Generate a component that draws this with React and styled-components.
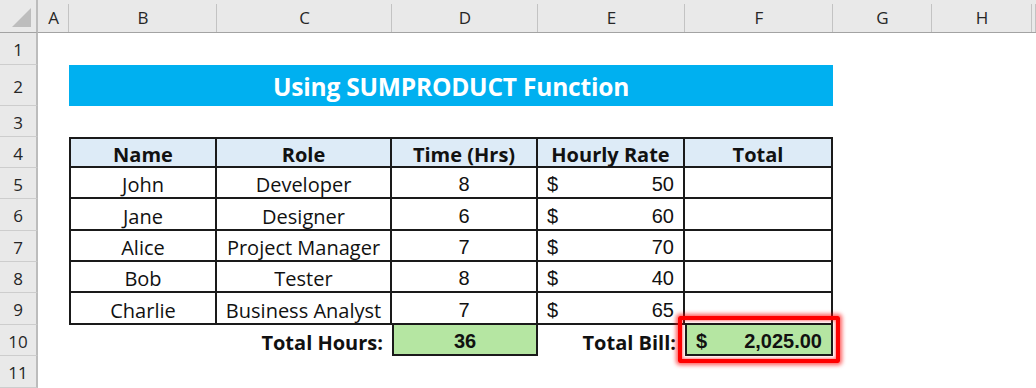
import React from 'react';
import styled, { createGlobalStyle, css } from 'styled-components';

const GlobalStyle = createGlobalStyle`
    html, body {
        margin: 0;
        padding: 0;
        background: #ffffff;
    }
    * {
        box-sizing: border-box;
    }
`;

// column widths (row-header, A..H, rest) and row heights (col-header, 1..11)
const COLS = [38, 31, 148, 175, 146, 147, 148, 99, 100];
const ROWS = [33, 32, 41, 31, 31, 31, 32, 31, 31, 32, 31, 32];
const LETTERS = ['A', 'B', 'C', 'D', 'E', 'F', 'G', 'H', ''];

const TEXT_FONT = `"Open Sans", "Noto Sans", sans-serif`;
const NUM_FONT = `"Liberation Sans", Arial, sans-serif`;
const LINE = '#1a1a1a';

const Sheet = styled.div`
    display: grid;
    grid-template-columns: ${COLS.map((c) => `${c}px`).join(' ')} 1fr;
    grid-template-rows: ${ROWS.map((r) => `${r}px`).join(' ')};
    width: 1036px;
    height: 388px;
    overflow: hidden;
    background: #ffffff;
    color: #111;
`;

const headerBase = css`
    background: #e9e9e9;
    color: #262626;
    font-family: ${TEXT_FONT};
    font-size: 17px;
    display: flex;
    align-items: center;
    justify-content: center;
`;

const Corner = styled.div`
    ${headerBase};
    grid-column: 1;
    grid-row: 1;
    border-bottom: 1px solid #a3a3a3;
    border-right: 2px solid #bcbcbc;
    align-items: flex-end;
    justify-content: flex-end;
    padding: 0 5px 5px 0;
`;

const ColHead = styled.div`
    ${headerBase};
    grid-column: ${(p) => p.$col};
    grid-row: 1;
    padding-top: 3px;
    border-bottom: 1px solid #a3a3a3;
    background:
        linear-gradient(#c3c3c3, #c3c3c3) right 4px / 1px calc(100% - 4px) no-repeat,
        #e9e9e9;
`;

const RowHead = styled.div`
    ${headerBase};
    grid-column: 1;
    grid-row: ${(p) => p.$row};
    border-bottom: 1px solid #cdcdcd;
    border-right: 2px solid #bcbcbc;
    padding-top: 2px;
`;

const Title = styled.div`
    grid-column: 3 / 8;
    grid-row: 3;
    background: #00b0f0;
    color: #ffffff;
    font-family: ${TEXT_FONT};
    font-weight: 700;
    font-size: 24.5px;
    letter-spacing: -0.2px;
    display: flex;
    align-items: center;
    justify-content: center;
    padding-top: 1px;
`;

const Cell = styled.div`
    grid-column: ${(p) => p.$col};
    grid-row: ${(p) => p.$row};
    display: flex;
    align-items: center;
    justify-content: ${(p) => p.$align || 'center'};
    padding: 4px 9px 0;
    font-family: ${(p) => (p.$num ? NUM_FONT : TEXT_FONT)};
    font-size: 20px;
    font-weight: ${(p) => (p.$bold ? 700 : 400)};
    white-space: nowrap;
    background: ${(p) => p.$fill || 'transparent'};
    border-right: ${(p) => (p.$boxed ? `2px solid ${LINE}` : 'none')};
    border-bottom: ${(p) => (p.$boxed ? `2px solid ${LINE}` : 'none')};
    border-left: ${(p) => (p.$left ? `2px solid ${LINE}` : 'none')};
    border-top: ${(p) => (p.$top ? `2px solid ${LINE}` : 'none')};
    position: ${(p) => (p.$highlight ? 'relative' : 'static')};

    ${(p) =>
        p.$highlight &&
        css`
            &::after {
                content: '';
                position: absolute;
                top: -9px;
                left: -9px;
                right: -9px;
                bottom: -9px;
                border: 4px solid #ff0000;
                border-radius: 2px;
                box-shadow: 0 0 4px 2px rgba(255, 0, 0, 0.65),
                    inset 0 0 3px 1px rgba(255, 0, 0, 0.5);
                pointer-events: none;
            }
        `}
`;

const HeaderCell = styled(Cell)`
    background: #ddebf7;
    font-weight: 700;
`;

const Money = styled(Cell)`
    justify-content: space-between;
`;

const TriangleIcon = () => (
    <svg width="19" height="19" viewBox="0 0 19 19">
        <polygon points="19,0 19,19 0,19" fill="#bdbdbd" />
    </svg>
);

const HEADERS = ['Name', 'Role', 'Time (Hrs)', 'Hourly Rate', 'Total'];

const DATA = [
    { name: 'John', role: 'Developer', hours: 8, rate: 50 },
    { name: 'Jane', role: 'Designer', hours: 6, rate: 60 },
    { name: 'Alice', role: 'Project Manager', hours: 7, rate: 70 },
    { name: 'Bob', role: 'Tester', hours: 8, rate: 40 },
    { name: 'Charlie', role: 'Business Analyst', hours: 7, rate: 65 },
];

const App = () => {
    const totalHours = DATA.reduce((s, d) => s + d.hours, 0);
    const totalBill = DATA.reduce((s, d) => s + d.hours * d.rate, 0);
    const billText = totalBill.toLocaleString('en-US', {
        minimumFractionDigits: 2,
        maximumFractionDigits: 2,
    });

    return (
        <>
            <GlobalStyle />
            <Sheet>
                <Corner>
                    <TriangleIcon />
                </Corner>
                {LETTERS.map((l, i) => (
                    <ColHead key={i} $col={i + 2}>
                        {l}
                    </ColHead>
                ))}
                {ROWS.slice(1).map((_, i) => (
                    <RowHead key={i} $row={i + 2}>
                        {i + 1}
                    </RowHead>
                ))}

                <Title>Using SUMPRODUCT Function</Title>

                {HEADERS.map((h, i) => (
                    <HeaderCell key={h} $col={i + 3} $row={5} $boxed $top $left={i === 0}>
                        {h}
                    </HeaderCell>
                ))}

                {DATA.map((d, i) => {
                    const row = i + 6;
                    return (
                        <React.Fragment key={d.name}>
                            <Cell $col={3} $row={row} $boxed $left>
                                {d.name}
                            </Cell>
                            <Cell $col={4} $row={row} $boxed>
                                {d.role}
                            </Cell>
                            <Cell $col={5} $row={row} $boxed $num>
                                {d.hours}
                            </Cell>
                            <Money $col={6} $row={row} $boxed $num>
                                <span>$</span>
                                <span>{d.rate}</span>
                            </Money>
                            <Cell $col={7} $row={row} $boxed />
                        </React.Fragment>
                    );
                })}

                <Cell $col={4} $row={11} $align="flex-end" $bold>
                    Total Hours:
                </Cell>
                <Cell $col={5} $row={11} $boxed $left $num $bold $fill="#b5e6a2">
                    {totalHours}
                </Cell>
                <Cell $col={6} $row={11} $align="flex-end" $bold>
                    Total Bill:
                </Cell>
                <Money $col={7} $row={11} $boxed $left $num $bold $fill="#b5e6a2" $highlight>
                    <span>$</span>
                    <span>{billText}</span>
                </Money>
            </Sheet>
        </>
    );
};

export default App;
